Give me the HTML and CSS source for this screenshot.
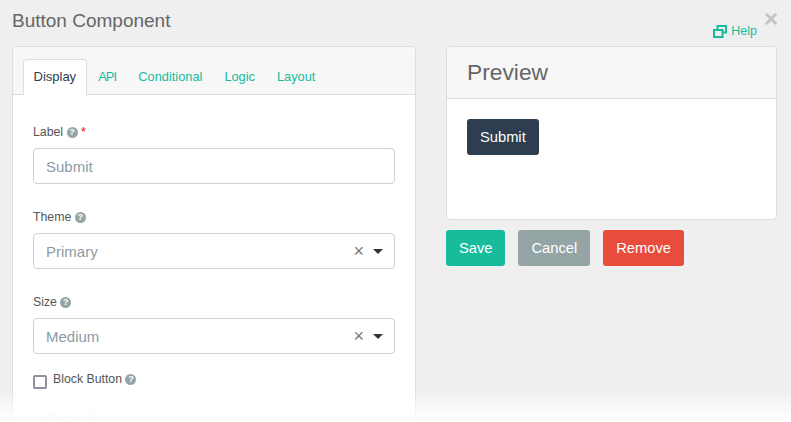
FILE: index.html
```html
<!DOCTYPE html>
<html lang="en">
<head>
<meta charset="utf-8">
<title>Button Component</title>
<link rel="stylesheet" href="styles.css">
</head>
<body>
<div class="modal">
  <header class="modal-head">
    <h1 class="modal-title">Button Component</h1>
    <a class="help">
      <svg class="help-icon" width="14" height="13" viewBox="0 0 14 13" aria-hidden="true"><path d="M4.5 4V1h8.5v6.5H10M1 5h8.5v7H1z" fill="none" stroke="currentColor" stroke-width="2"/></svg>
      Help
    </a>
  </header>
  <span class="close">×</span>
  <main class="columns">
    <section class="panel form-panel">
      <nav class="tabs">
        <a class="tab active">Display</a>
        <a class="tab tab-tight">API</a>
        <a class="tab">Conditional</a>
        <a class="tab">Logic</a>
        <a class="tab">Layout</a>
      </nav>
      <div class="form">
        <div class="field">
          <div class="label">Label <i class="q">?</i> <b class="req">*</b></div>
          <div class="control">Submit</div>
        </div>
        <div class="field">
          <div class="label">Theme <i class="q">?</i></div>
          <div class="control"><span class="value">Primary</span><span class="clear">×</span><span class="caret"></span></div>
        </div>
        <div class="field">
          <div class="label">Size <i class="q">?</i></div>
          <div class="control"><span class="value">Medium</span><span class="clear">×</span><span class="caret"></span></div>
        </div>
        <div class="check">
          <span class="box"></span>
          <span class="label check-label">Block Button <i class="q">?</i></span>
        </div>
        <div class="label faint">Left Icon <i class="q">?</i></div>
      </div>
    </section>
    <aside class="side">
      <section class="panel preview">
        <h2 class="preview-head">Preview</h2>
        <div class="preview-body"><button class="btn btn-dark">Submit</button></div>
      </section>
      <div class="actions">
        <button class="btn btn-save">Save</button>
        <button class="btn btn-cancel">Cancel</button>
        <button class="btn btn-remove">Remove</button>
      </div>
    </aside>
  </main>
  <div class="fade"></div>
</div>
</body>
</html>
```

FILE: styles.css
```css
* { box-sizing: border-box; }
html, body { margin: 0; height: 100%; overflow: hidden; }
body { font-family: "Liberation Sans", Arial, sans-serif; color: #555; background: #efefef; }
.modal { position: relative; width: 791px; height: 422px; overflow: hidden; background: #efefef; }
.modal-head { display: flex; justify-content: space-between; height: 46px; padding: 0 34px 0 12px; }
.modal-title { margin: 9px 0 0; font-size: 19px; line-height: 24px; font-weight: 400; color: #666; }
.help { display: flex; align-items: center; gap: 4px; height: 14px; margin-top: 24px; font-size: 12.5px; color: #18bc9c; }
.help-icon { display: block; }
.close { position: absolute; top: 7px; right: 13px; font-size: 24px; line-height: 24px; font-weight: 700; color: #c4c4c4; }
.columns { display: grid; grid-template-columns: 404px 331px; gap: 30px; padding-left: 12px; }
.panel { background: #fff; border: 1px solid #ddd; border-radius: 4px; }
.form-panel { height: 420px; }
.tabs { display: flex; height: 48px; padding: 12px 9.5px 0; background: #f7f7f7; border-bottom: 1px solid #ddd; border-radius: 4px 4px 0 0; }
.tab { height: 36px; padding: 10px 11px 0; font-size: 12.8px; line-height: 15px; color: #18bc9c; white-space: nowrap; }
.tab-tight { letter-spacing: -0.8px; }
.tab.active { height: 36px; background: #fff; border: 1px solid #ddd; border-bottom: 0; border-radius: 4px 4px 0 0; padding: 9px 10px 0; font-size: 13px; color: #2c3e50; }
.form { display: flex; flex-direction: column; padding: 30px 20px 0; }
.field { display: flex; flex-direction: column; gap: 8px; margin-bottom: 26px; }
.label { font-size: 12.3px; line-height: 15px; color: #555; white-space: nowrap; }
.q { display: inline-block; width: 11px; height: 11px; border-radius: 50%; background: #95a5a6; color: #fff; font: 700 9px/11px "Liberation Sans", sans-serif; text-align: center; vertical-align: 1px; }
.req { font-weight: 400; color: #f00; }
.control { display: flex; align-items: center; height: 36px; padding: 0 12px; border: 1px solid #ccd0d8; border-radius: 4px; font-size: 15px; color: #8d9aa5; background: #fff; }
.value { flex: 1; }
.clear { font-size: 18px; line-height: 18px; color: #777; margin-right: 8px; }
.caret { width: 0; height: 0; border: 5px solid transparent; border-top: 5px solid #333; border-bottom: 0; margin-right: -1px; margin-left: 1px; }
.check { display: flex; gap: 6px; height: 24px; margin-top: -11px; }
.box { width: 14px; height: 14px; margin-top: 6px; border: 2px solid #8f8f9d; border-radius: 2px; background: #fff; }
.check-label { padding-top: 3px; }
.faint { margin-top: 18px; color: #ddd; }
.faint .q { background: #eee; }
.side { display: flex; flex-direction: column; gap: 10px; }
.preview { height: 174px; display: flex; flex-direction: column; }
.preview-head { margin: 0; height: 52px; padding: 0 20px; font-size: 22.8px; line-height: 50px; font-weight: 400; color: #666; background: #f7f7f7; border-bottom: 1px solid #ddd; border-radius: 4px 4px 0 0; }
.preview-body { padding: 20px; }
.btn { display: block; height: 36px; padding: 1px 13px 0; border: 0; border-radius: 3px; font: 14.7px/35px "Liberation Sans", Arial, sans-serif; color: #fff; }
.btn-dark { background: #2c3e50; }
.actions { display: flex; gap: 13px; }
.btn-save { background: #18bc9c; }
.btn-cancel { background: #95a5a6; }
.btn-remove { background: #e74c3c; }
.fade { position: absolute; left: 0; right: 0; bottom: 0; height: 32px; background: linear-gradient(rgba(255,255,255,0), #fff 95%); }
```
